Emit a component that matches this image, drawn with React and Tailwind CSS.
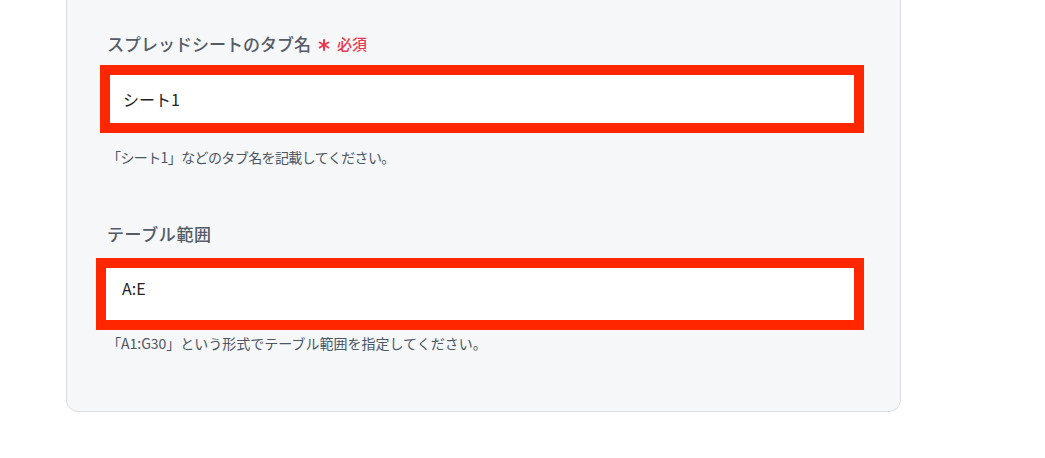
export default function App() {
  const font = { fontFamily: '"Noto Sans CJK JP", "Noto Sans", sans-serif' };
  return (
    <div className="w-[1045px] h-[458px] bg-white overflow-hidden" style={font}>
      <div className="ml-[66px] w-[835px] -mt-[20px] bg-[#f6f7f9] border border-[#d8dce2] rounded-xl px-10 pt-[51px] pb-[60px]">
        <div className="flex items-center h-6 text-[17px] font-medium text-[#545b66]">
          <span className="tracking-[0px]">スプレッドシートのタブ名</span>
          <svg className="ml-[7px] mt-[2px]" width="12" height="12" viewBox="0 0 12 12">
            <g stroke="#e8384f" strokeWidth="2" strokeLinecap="round">
              <line x1="6" y1="1" x2="6" y2="11" />
              <line x1="1.7" y1="3.5" x2="10.3" y2="8.5" />
              <line x1="1.7" y1="8.5" x2="10.3" y2="3.5" />
            </g>
          </svg>
          <span className="ml-[7px] text-[#e8384f] text-[15px] font-medium">必須</span>
        </div>
        <div className="mt-[9px] -ml-[7px] w-[764px] h-[68px] border-[10px] border-[#ff2600] bg-white flex items-center pl-[13px]">
          <span className="text-[16px] text-[#222]">シート1</span>
        </div>
        <div className="mt-[16px] h-4 text-[14px] leading-4 text-[#4b5563] tracking-[-0.6px]">「シート1」などのタブ名を記載してください。</div>

        <div className="mt-[57px] h-6 flex items-center text-[17px] font-medium text-[#545b66] tracking-[0.6px]">テーブル範囲</div>
        <div className="mt-[12px] -ml-[11px] w-[768px] h-[72px] border-[10px] border-[#ff2600] bg-white flex items-center pl-[16px] pb-[12px]">
          <span className="text-[16px] text-[#222]">A:E</span>
        </div>
        <div className="mt-[5px] h-4 text-[14px] leading-4 text-[#4b5563]">「A1:G30」という形式でテーブル範囲を指定してください。</div>
      </div>
    </div>
  );
}
